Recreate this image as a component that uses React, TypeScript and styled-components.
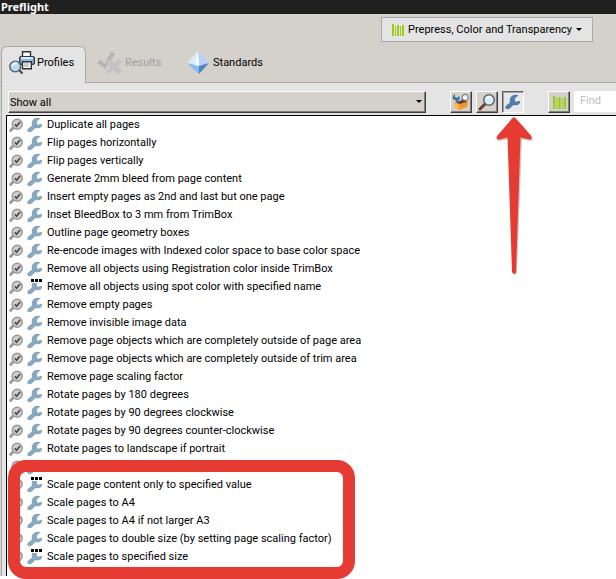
import React from "react";
import styled, { createGlobalStyle, css } from "styled-components";

const Global = createGlobalStyle`
  * { box-sizing: border-box; }
  body { margin: 0; background: #fff; }
  body, button, input, select { font: 11px/16px Roboto, Tahoma, sans-serif; color: #000; }
`;

const Page = styled.main`
  padding-bottom: 3px;
  overflow: hidden;
`;
const Dialog = styled.section`
  background: #d4d0ca;
  position: relative;
`;
const TitleBar = styled.h1`
  margin: 0;
  height: 14px;
  padding-left: 1px;
  background: #202020;
  color: #fff;
  font: 700 11px/14px "Noto Sans", Tahoma, sans-serif;
`;
const LibraryBar = styled.div`
  display: flex;
  justify-content: flex-end;
  padding: 3px 23px 4px 0;
`;
const LibraryButton = styled.button`
  display: flex;
  align-items: center;
  gap: 4px;
  height: 25px;
  padding: 0 10px;
  border: 1px solid #a9a9a9;
  background: #e4e4e4;
`;
const Tabs = styled.div`
  display: flex;
  gap: 4px;
  height: 37px;
  padding-left: 1px;
  box-shadow: inset 0 -1px #a9a9a9;
`;
const Tab = styled.button<{ $active?: boolean; $width: number }>`
  display: flex;
  align-items: center;
  gap: 2px;
  width: ${(p) => p.$width}px;
  padding: 0 0 4px 7px;
  border: 0;
  background: none;
  white-space: nowrap;
  &:disabled { color: #a0a0a0; }
  ${(p) => p.$active && css`
    border: 1px solid #a9a9a9;
    border-bottom: 0;
    border-radius: 6px 6px 0 0;
    background: #e4e4e4;
  `}
`;
const Panel = styled.div`
  padding: 8px 0 0 4px;
  margin-left: 1px;
  border-left: 1px solid #a9a9a9;
  background: #e4e4e4;
`;
const Toolbar = styled.div`
  display: flex;
  padding-left: 2px;
  margin-bottom: 2px;
`;
const SelectBox = styled.div`
  position: relative;
  flex: 1;
  svg { position: absolute; right: 4px; top: 9px; pointer-events: none; }
`;
const raised = css`
  border: 1px solid;
  border-color: #fff #404040 #404040 #fff;
  box-shadow: inset -1px -1px #808080;
  background: #d4d0ca;
`;
const Filter = styled.select`
  ${raised}
  appearance: none;
  display: block;
  width: 100%;
  height: 22px;
  padding: 1px 20px 0 1px;
  border-radius: 0;
`;
const Tools = styled.div`
  display: flex;
  gap: 4px;
  margin-left: 24px;
`;
const ToolButton = styled.button<{ $pressed?: boolean }>`
  ${raised}
  display: flex;
  align-items: center;
  justify-content: center;
  width: 22px;
  height: 22px;
  padding: 0;
  ${(p) => p.$pressed && css`
    background: #e8e8e8;
    border-color: #606060 #fff #fff #606060;
    box-shadow: inset 1px 1px #a0a0a0;
  `}
`;
const Search = styled.div`
  display: flex;
  gap: 4px;
  margin-left: 24px;
`;
const Find = styled.input`
  width: 42px;
  height: 21px;
  border: 0;
  border-radius: 0;
  padding: 0 0 2px 6px;
  background: #fff;
  &::placeholder { color: #bcbcbc; opacity: 1; }
`;
const List = styled.ul`
  list-style: none;
  margin: 0;
  padding: 0;
  border: solid #000;
  border-width: 1px 0 0 1px;
  background: #fff;
`;
const Item = styled.li`
  display: flex;
  align-items: center;
  gap: 4px;
  height: 18px;
  padding-left: 1px;
  white-space: nowrap;
`;
const Group = styled.ul`
  position: relative;
  list-style: none;
  margin: 0;
  padding: 0 0 10px;
`;
const Highlight = styled.li`
  position: absolute;
  left: 1px;
  top: 2px;
  bottom: -3px;
  width: 347px;
  border: 12px solid #e63b32;
  border-radius: 18px;
  pointer-events: none;
`;
const Pointer = styled.svg`
  position: absolute;
  right: 82px;
  top: 115px;
`;

const Wrench = ({ color = "#87a8bf", size = 16, dots = false }) => (
  <svg width={size} height={size} viewBox="0 0 16 16" aria-hidden="true">
    <path
      d="M13.6 1.3 10 4.2Q9.4 6.6 10.8 7.8L15.2 6.8Q15.2 11.4 10.5 11.3L8 11.2Q6 13.5 4.5 14.7 2 15.8.5 14.2-.2 12.8 1 11.8L5 8.5Q4 4.5 6.5 2.3 9.5 0 13.6 1.3Z"
      fill={color}
    />
    {dots && (
      <>
        <path d="M3 0h13v4H3z" fill="#fff" />
        <path d="M4 0h3v3H4zM8 0h3v3H8zM12 0h3v3h-3z" />
      </>
    )}
  </svg>
);
const Check = () => (
  <svg width="15" height="16" viewBox="0 0 15 16" aria-hidden="true">
    <path d="M5.500 10.500 2.600 13.500" stroke="#9a9a9a" strokeWidth="2.8" strokeLinecap="round" />
    <circle cx="9.2" cy="7.3" r="5" fill="#cecece" stroke="#999" strokeWidth="1.5" />
    <path d="m6.800 7.200 1.800 2.100 3.400-4.200" fill="none" stroke="#484848" strokeWidth="1.600" />
  </svg>
);
const Bars = ({ large = false }) => (
  <svg width={large ? 13 : 12} height={large ? 13 : 12} viewBox="0 0 12 12" aria-hidden="true">
    <path d="M0 0h2v12H0zM3 2h1v10H3zM5 1h2v11H5zM8 2h1v10H8zM10 1h2v11h-2z" fill="#9fcb12" />
  </svg>
);
const Caret = () => (
  <svg width="6" height="3" viewBox="0 0 6 3" aria-hidden="true"><path d="M0 0h6L3 3z" /></svg>
);
const Lens = () => (
  <svg width="18" height="18" viewBox="0 0 18 18" aria-hidden="true">
    <path d="m7 11-5 5" stroke="#74382b" strokeWidth="3" strokeLinecap="round" />
    <circle cx="11" cy="7" r="5.3" fill="#d8edf8" stroke="#54646e" strokeWidth="1.5" />
    <path d="M8 6c1-2 3-3 5-2" fill="none" stroke="#fff" strokeWidth="1.5" />
  </svg>
);
const Toolbox = () => (
  <svg width="18" height="18" viewBox="0 0 18 18" aria-hidden="true">
    <path d="m2 9 4 2 10-3-1 6-8 3-5-3z" fill="#f5962c" />
    <path d="m2 9 5 3v5l-5-3z" fill="#ffb755" />
    <path d="m3 9 4 2 8-2-3-2z" fill="#6a3f1c" />
    <path d="M3 1v3l2 1 2-2c2 3 0 4-1 4l3 3-2 1-4-4C0 7 0 3 3 1Z" fill="#416f9e" />
    <path d="m11 7-3 3" stroke="#613e29" strokeWidth="2" />
    <circle cx="13.2" cy="4.5" r="3.1" fill="#eef8ff" stroke="#52606a" />
  </svg>
);
const PrinterLens = () => (
  <svg width="26" height="24" viewBox="0 0 26 24" aria-hidden="true">
    <path d="M13.5 6V.7h8V6" fill="#fff" stroke="#303030" strokeWidth="1.4" />
    <rect x="10.7" y="5.7" width="14.6" height="7.5" rx="1.5" fill="#8ebae8" stroke="#303842" strokeWidth="1.4" />
    <path d="M12 7h12" stroke="#d5e9fb" strokeWidth="2" />
    <path d="M13.5 10.7h8.8v7h-8.8z" fill="#fff" stroke="#303030" strokeWidth="1.4" />
    <path d="M15 13h5M15 15h5" stroke="#999" />
    <path d="m9.5 18.5 4 4" stroke="#444" strokeWidth="2.2" />
    <circle cx="6.2" cy="15.5" r="5.4" fill="#b9dcf5" stroke="#54606a" strokeWidth="1.4" />
    <path d="M3.8 15c.4-2 2-3 4-2.5" fill="none" stroke="#fff" strokeWidth="1.5" />
  </svg>
);
const ResultMarks = () => (
  <svg width="26" height="24" viewBox="0 0 26 24" aria-hidden="true">
    <path d="m0 11.500 4-3 3.500 4.500L14.500 0l3.500 3L8 18z" fill="#b4b4b4" />
    <path d="m9 11 3.500-3.500 4.500 4.500 4-4.500L25 11l-4.500 4.500L25 20l-4 3.500-4.500-4.500-4.500 4.500L8.500 20l4.500-4.500z" fill="#c3c3c3" />
  </svg>
);
const Diamond = () => (
  <svg width="24" height="24" viewBox="0 0 24 24" aria-hidden="true">
    <path d="M11 0 0 12l12 3z" fill="#dcebfc" />
    <path d="m11 0 11 12-10 3z" fill="#b4d3f6" />
    <path d="m0 12 12 3v8z" fill="#8abcf0" />
    <path d="m22 12-10 3v8z" fill="#4e83c4" />
    <path d="M11 0 8 14l4 1z" fill="#fff" />
  </svg>
);

type Fixup = { name: string; dots?: boolean };
const fixups: Fixup[] = [
  { name: "Duplicate all pages" },
  { name: "Flip pages horizontally" },
  { name: "Flip pages vertically" },
  { name: "Generate 2mm bleed from page content" },
  { name: "Insert empty pages as 2nd and last but one page" },
  { name: "Inset BleedBox to 3 mm from TrimBox" },
  { name: "Outline page geometry boxes" },
  { name: "Re-encode images with Indexed color space to base color space" },
  { name: "Remove all objects using Registration color inside TrimBox" },
  { name: "Remove all objects using spot color with specified name", dots: true },
  { name: "Remove empty pages" },
  { name: "Remove invisible image data" },
  { name: "Remove page objects which are completely outside of page area" },
  { name: "Remove page objects which are completely outside of trim area" },
  { name: "Remove page scaling factor" },
  { name: "Rotate pages by 180 degrees" },
  { name: "Rotate pages by 90 degrees clockwise" },
  { name: "Rotate pages by 90 degrees counter-clockwise" },
  { name: "Rotate pages to landscape if portrait" },
];
const scaling: Fixup[] = [
  { name: "" },
  { name: "Scale page content only to specified value", dots: true },
  { name: "Scale pages to A4" },
  { name: "Scale pages to A4 if not larger A3" },
  { name: "Scale pages to double size (by setting page scaling factor)" },
  { name: "Scale pages to specified size", dots: true },
];
const Row = ({ name, dots }: Fixup) => (
  <Item><Check /><Wrench dots={dots} />{name}</Item>
);

export default function App() {
  return (
    <Page>
      <Global />
      <Dialog>
        <TitleBar>Preflight</TitleBar>
        <LibraryBar>
          <LibraryButton><Bars />Prepress, Color and Transparency<Caret /></LibraryButton>
        </LibraryBar>
        <Tabs role="tablist">
          <Tab role="tab" aria-selected="true" $active $width={85}><PrinterLens />Profiles</Tab>
          <Tab role="tab" disabled $width={86}><ResultMarks />Results</Tab>
          <Tab role="tab" $width={100}><Diamond />Standards</Tab>
        </Tabs>
        <Panel>
          <Toolbar>
            <SelectBox>
              <Filter aria-label="Filter"><option>Show all</option></Filter>
              <Caret />
            </SelectBox>
            <Tools>
              <ToolButton aria-label="Profiles"><Toolbox /></ToolButton>
              <ToolButton aria-label="Checks"><Lens /></ToolButton>
              <ToolButton aria-label="Fixups" aria-pressed="true" $pressed><Wrench color="#507eae" size={16} /></ToolButton>
            </Tools>
            <Search>
              <ToolButton aria-label="Library"><Bars large /></ToolButton>
              <Find aria-label="Find" placeholder="Find" />
            </Search>
          </Toolbar>
          <List>
            {fixups.map((f) => <Row key={f.name} {...f} />)}
            <li>
              <Group>
                {scaling.map((f) => <Row key={f.name} {...f} />)}
                <Highlight aria-hidden="true" />
              </Group>
            </li>
          </List>
        </Panel>
        <Pointer width="38" height="162" viewBox="0 0 38 162" aria-hidden="true">
          <path d="M19 3 36 22Q38 26 34 26L26 24 21 158Q19 161 17 158L13 24 4 26Q0 26 2 22Z" fill="#c8c8c8" />
          <path d="M16.500 3Q18 1.500 19.500 3L35 20.500Q37 25 33 24.500L24.500 22.500 20 157Q18 161 16 157L11.500 22.500 3 24.500Q-1 25 1.500 20.500Z" fill="#e63b32" />
        </Pointer>
      </Dialog>
    </Page>
  );
}
